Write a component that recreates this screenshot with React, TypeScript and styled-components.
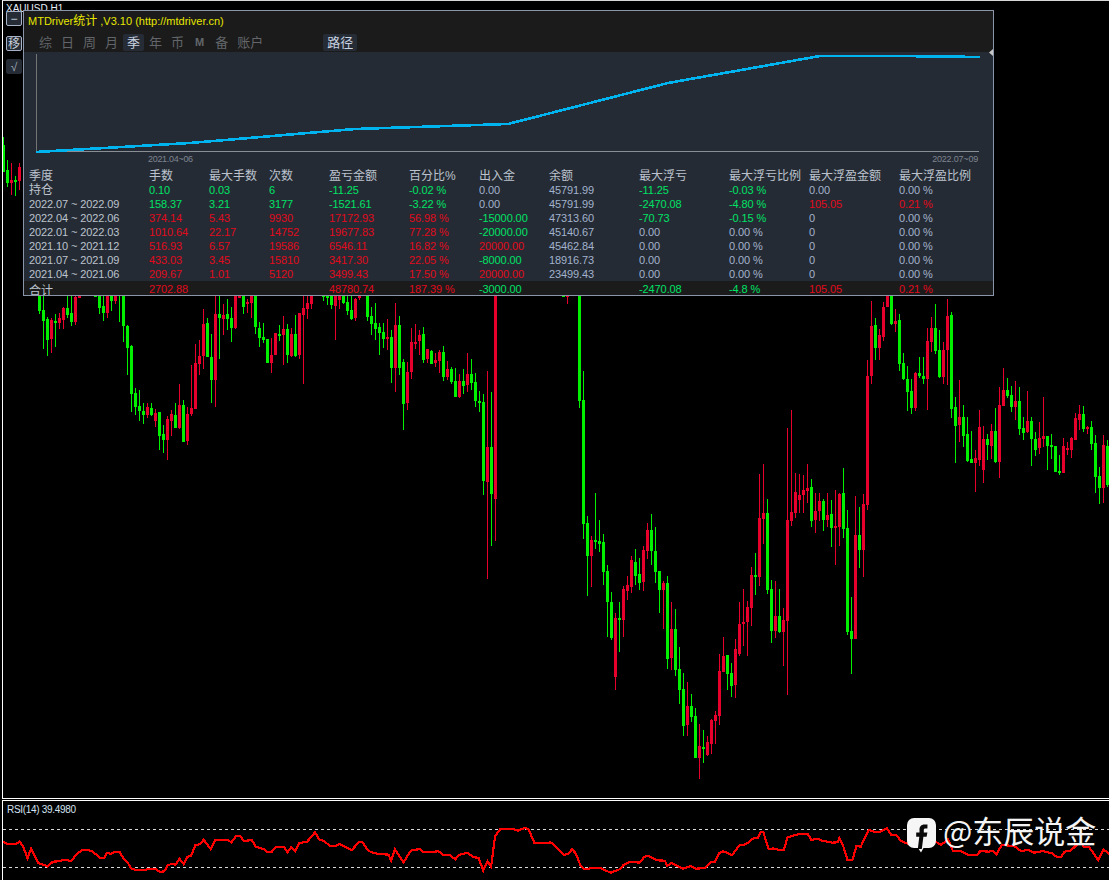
import styled, {createGlobalStyle} from 'styled-components';

const GlobalStyle = createGlobalStyle`
  html, body {
    margin: 0;
    background: #000;
  }
`;

const UI_FONT = `"Liberation Sans", "Noto Sans CJK SC", sans-serif`;

const Page = styled.div`
  width: 1109px;
  height: 880px;
  padding-left: 2px;
  box-sizing: border-box;
  overflow: hidden;
  background: #000;
  font-family: ${UI_FONT};
  display: flex;
  flex-direction: column;
  gap: 1px;
`;

const ChartPane = styled.div`
  position: relative;
  height: 799px;
  flex: none;
  box-sizing: border-box;
  border-left: 1px solid #fff;
  border-top: 1px solid #d8d8d8;
  border-bottom: 1px solid #fff;
`;

const IndicatorPane = styled.div`
  position: relative;
  flex: 1;
  border-left: 1px solid #fff;
  border-top: 1px solid #fff;
`;

const PlotSvg = styled.svg`
  display: block;
  width: 100%;
  height: 100%;
`;

const SymbolLabel = styled.div`
  position: absolute;
  left: 3px;
  top: 2px;
  font-size: 10px;
  line-height: 12px;
  color: #e8eef8;
`;

const SideButton = styled.div<{$top: number; $flat?: boolean}>`
  position: absolute;
  left: 3px;
  top: ${p => p.$top}px;
  width: 16px;
  height: 15px;
  box-sizing: border-box;
  display: flex;
  align-items: center;
  justify-content: center;
  border: 1px solid ${p => (p.$flat ? '#262c35' : '#a8b2c6')};
  border-radius: 2px;
  background: #262c35;
  color: ${p => (p.$flat ? '#9aa4b4' : '#c8d0dc')};
  font-size: 12px;
  line-height: 12px;
`;

const Panel = styled.div`
  position: absolute;
  left: 20px;
  top: 9px;
  width: 971px;
  height: 286px;
  box-sizing: border-box;
  border: 1px solid #8b95a9;
  background: #1b1b1b;
  display: flex;
  flex-direction: column;
`;

const TitleBar = styled.div`
  height: 23px;
  flex: none;
  padding: 2px 0 0 4px;
  box-sizing: border-box;
  color: #e6e600;
  font-size: 11px;
  line-height: 17px;
`;

const TitleCjk = styled.span`
  font-size: 12px;
`;

const TabRow = styled.div`
  height: 18px;
  flex: none;
  padding-left: 11px;
  display: flex;
  align-items: flex-start;
`;

const Tab = styled.div<{$active?: boolean; $small?: boolean; $gapLeft?: number}>`
  height: 17px;
  padding: 0 ${p => (p.$small ? 6 : 4)}px;
  margin-left: ${p => p.$gapLeft ?? 0}px;
  margin-right: 1px;
  border-radius: 2px;
  background: ${p => (p.$active ? '#262c35' : 'transparent')};
  color: ${p => (p.$active ? '#c8d2e0' : '#62666a')};
  font-size: ${p => (p.$small ? 11 : 13)}px;
  font-weight: ${p => (p.$small ? 700 : 400)};
  line-height: 17px;
`;

const Content = styled.div`
  flex: 1;
  background: #252b34;
  display: flex;
  flex-direction: column;
`;

const ProfitSvg = styled.svg`
  display: block;
  flex: none;
  width: 969px;
  height: 117px;
  overflow: visible;
`;

const tones = {
  label: '#bcc3ce',
  plain: '#a2b2cc',
  up: '#00e266',
  down: '#e00a1c',
};

type Tone = keyof typeof tones;

const COLUMNS = '120px 60px 60px 60px 80px 70px 70px 90px 90px 80px 90px 1fr';

const Row = styled.div<{$total?: boolean}>`
  height: 14px;
  flex: none;
  padding-left: 5px;
  display: grid;
  grid-template-columns: ${COLUMNS};
  background: ${p => (p.$total ? '#1b1b1b' : 'transparent')};
  overflow: hidden;
`;

const Cell = styled.div<{$tone: Tone; $cjk?: boolean; $drop?: number}>`
  color: ${p => tones[p.$tone]};
  font-size: ${p => (p.$cjk ? 12 : 11)}px;
  letter-spacing: ${p => (p.$cjk ? 0 : -0.1)}px;
  line-height: 14px;
  padding-top: ${p => p.$drop ?? 0}px;
  white-space: nowrap;
`;

const Handle = styled.span`
  display: inline-block;
  font-size: 31px;
  line-height: 36px;
  margin-bottom: 11px;
`;

const Watermark = styled.div`
  position: absolute;
  left: 904px;
  top: 11px;
  display: flex;
  align-items: center;
  gap: 7px;
  color: #f4f4f4;
  font-family: "Noto Sans CJK SC", "Liberation Sans", sans-serif;
  white-space: nowrap;
`;

const RsiLabel = styled.div`
  position: absolute;
  left: 4px;
  top: 3px;
  color: #d4e2f2;
  font-size: 10px;
  letter-spacing: -0.3px;
  line-height: 12px;
`;

// [bar index, high, body top, body bottom, low, green?]
// y values are thirds of a pixel below y=290
type Bar = [number, number, number, number, number, number];

const BARS: Bar[] = [
  [-9, -459, -435, -354, -354, 1],
  [-8, -390, -360, -321, -309, 1],
  [-7, -381, -330, -321, -285, 0],
  [-6, -342, -330, -324, -282, 1],
  [-5, -381, -369, -327, -300, 0],
  [0, 0, 0, 63, 72, 1],
  [1, 0, 60, 93, 178, 1],
  [2, 80, 87, 150, 197, 1],
  [3, 85, 90, 147, 188, 0],
  [4, 72, 93, 96, 170, 1],
  [5, 70, 84, 98, 117, 0],
  [6, 52, 54, 90, 117, 0],
  [7, 0, 54, 76, 85, 1],
  [8, 0, 69, 96, 108, 1],
  [9, 0, 22, 96, 105, 0],
  [10, 0, 0, 24, 24, 0],
  [14, 0, 0, 20, 20, 1],
  [15, 0, 0, 55, 72, 1],
  [16, 0, 47, 69, 93, 1],
  [17, 0, 0, 69, 84, 0],
  [18, 0, 0, 34, 64, 1],
  [19, 0, 0, 34, 42, 0],
  [20, 0, 0, 0, 96, 1],
  [21, 0, 0, 108, 156, 1],
  [22, 105, 108, 174, 255, 1],
  [23, 165, 168, 312, 365, 1],
  [24, 295, 310, 351, 375, 1],
  [25, 300, 348, 363, 393, 1],
  [26, 339, 363, 375, 402, 1],
  [27, 339, 351, 375, 384, 0],
  [28, 339, 354, 375, 378, 1],
  [29, 357, 369, 393, 411, 0],
  [30, 366, 366, 438, 480, 1],
  [31, 405, 432, 450, 489, 1],
  [32, 378, 387, 450, 510, 0],
  [33, 360, 372, 393, 438, 0],
  [34, 339, 375, 414, 414, 1],
  [35, 282, 345, 414, 417, 0],
  [36, 330, 345, 456, 456, 1],
  [37, 351, 372, 453, 465, 0],
  [38, 225, 354, 372, 378, 0],
  [39, 162, 219, 357, 357, 0],
  [40, 150, 198, 222, 255, 0],
  [41, 57, 102, 198, 237, 0],
  [42, 85, 99, 201, 201, 1],
  [43, 132, 201, 270, 339, 1],
  [44, 0, 72, 270, 351, 0],
  [45, 0, 72, 84, 207, 1],
  [46, 42, 75, 87, 135, 0],
  [47, 27, 72, 87, 120, 1],
  [48, 50, 84, 114, 156, 1],
  [49, 0, 0, 114, 117, 0],
  [50, 0, 0, 24, 24, 0],
  [51, 0, 0, 51, 72, 1],
  [52, 27, 36, 42, 69, 0],
  [53, 0, 0, 39, 84, 0],
  [54, 0, 0, 111, 132, 1],
  [55, 96, 114, 144, 171, 1],
  [56, 99, 141, 150, 159, 1],
  [57, 147, 147, 219, 219, 1],
  [58, 144, 195, 219, 249, 0],
  [59, 129, 129, 195, 195, 0],
  [60, 105, 132, 135, 153, 1],
  [61, 78, 117, 135, 225, 0],
  [62, 102, 117, 195, 219, 1],
  [63, 114, 132, 198, 201, 0],
  [64, 75, 132, 198, 201, 1],
  [65, 69, 69, 195, 207, 0],
  [66, 0, 54, 75, 282, 0],
  [67, 0, 39, 57, 87, 0],
  [68, 0, 0, 42, 57, 0],
  [71, 0, 0, 20, 33, 1],
  [72, 0, 0, 24, 45, 1],
  [73, 0, 0, 45, 57, 1],
  [74, 0, 0, 48, 150, 0],
  [75, 0, 0, 30, 57, 0],
  [76, 0, 0, 39, 42, 1],
  [77, 0, 36, 63, 75, 1],
  [78, 0, 60, 87, 90, 1],
  [79, 24, 27, 84, 93, 0],
  [80, 0, 0, 24, 30, 0],
  [82, 0, 0, 81, 93, 1],
  [83, 51, 78, 102, 135, 1],
  [84, 39, 99, 117, 150, 1],
  [85, 100, 111, 129, 195, 1],
  [86, 99, 126, 147, 174, 1],
  [87, 87, 141, 144, 180, 0],
  [88, 120, 141, 234, 279, 1],
  [89, 39, 105, 234, 306, 0],
  [90, 78, 105, 234, 255, 1],
  [91, 207, 216, 342, 420, 1],
  [92, 216, 246, 339, 360, 0],
  [93, 114, 156, 246, 267, 0],
  [94, 102, 156, 159, 177, 0],
  [95, 120, 135, 153, 195, 0],
  [96, 111, 132, 210, 219, 1],
  [97, 177, 177, 207, 219, 0],
  [98, 180, 183, 222, 222, 1],
  [99, 189, 210, 219, 231, 0],
  [100, 180, 186, 213, 249, 0],
  [101, 168, 186, 261, 273, 1],
  [102, 213, 237, 261, 270, 0],
  [103, 231, 237, 276, 282, 1],
  [104, 234, 273, 321, 321, 1],
  [105, 252, 273, 321, 324, 0],
  [106, 237, 273, 288, 312, 1],
  [107, 189, 252, 285, 306, 0],
  [108, 207, 252, 279, 300, 1],
  [109, 249, 276, 333, 351, 1],
  [110, 303, 333, 339, 366, 1],
  [111, 312, 336, 573, 615, 1],
  [112, 243, 471, 576, 867, 0],
  [113, 306, 471, 612, 768, 1],
  [114, 0, 0, 627, 753, 0],
  [131, 0, 0, 20, 20, 1],
  [132, 0, 0, 20, 42, 0],
  [135, 0, 0, 333, 354, 1],
  [136, 243, 330, 702, 747, 1],
  [137, 678, 699, 798, 918, 1],
  [138, 738, 750, 798, 891, 0],
  [139, 609, 750, 756, 777, 1],
  [140, 690, 753, 762, 786, 1],
  [141, 732, 756, 846, 885, 1],
  [142, 825, 843, 936, 1041, 1],
  [143, 906, 936, 1044, 1050, 1],
  [144, 969, 984, 1161, 1200, 0],
  [145, 936, 984, 990, 1086, 1],
  [146, 888, 897, 990, 1041, 0],
  [147, 858, 885, 903, 930, 0],
  [148, 798, 810, 891, 909, 0],
  [149, 777, 816, 858, 885, 1],
  [150, 804, 852, 879, 900, 1],
  [151, 768, 780, 876, 903, 0],
  [152, 699, 720, 783, 807, 0],
  [153, 672, 720, 783, 825, 1],
  [154, 711, 783, 846, 879, 1],
  [155, 843, 843, 900, 969, 1],
  [156, 873, 879, 900, 1017, 0],
  [157, 858, 879, 1107, 1137, 1],
  [158, 936, 1017, 1104, 1140, 0],
  [159, 957, 1017, 1140, 1158, 1],
  [160, 1071, 1137, 1200, 1242, 1],
  [161, 1149, 1197, 1308, 1338, 1],
  [162, 1176, 1248, 1305, 1338, 0],
  [163, 1212, 1248, 1281, 1296, 1],
  [164, 1254, 1278, 1404, 1404, 1],
  [165, 1302, 1368, 1404, 1467, 0],
  [166, 1320, 1371, 1377, 1419, 1],
  [167, 1338, 1356, 1395, 1398, 0],
  [168, 1287, 1290, 1362, 1392, 0],
  [169, 1263, 1275, 1293, 1362, 0],
  [170, 1092, 1143, 1278, 1305, 0],
  [171, 1041, 1098, 1146, 1146, 0],
  [172, 1095, 1095, 1152, 1200, 1],
  [173, 1119, 1149, 1188, 1221, 1],
  [174, 1047, 1077, 1185, 1224, 0],
  [175, 936, 1002, 1092, 1098, 0],
  [176, 897, 996, 1002, 1068, 0],
  [177, 933, 951, 996, 1098, 0],
  [178, 831, 855, 954, 1008, 0],
  [179, 789, 855, 861, 915, 1],
  [180, 552, 684, 861, 888, 0],
  [181, 522, 669, 687, 762, 0],
  [182, 628, 669, 900, 912, 1],
  [183, 870, 897, 1023, 1059, 1],
  [184, 873, 978, 1023, 1044, 0],
  [185, 897, 978, 1026, 1029, 1],
  [186, 954, 990, 1026, 1128, 0],
  [187, 414, 690, 993, 1215, 0],
  [188, 360, 666, 693, 708, 0],
  [189, 549, 606, 669, 684, 0],
  [190, 552, 615, 630, 669, 0],
  [191, 555, 600, 615, 669, 0],
  [192, 522, 594, 603, 639, 0],
  [193, 567, 591, 693, 711, 1],
  [194, 609, 663, 690, 729, 0],
  [195, 609, 633, 663, 693, 0],
  [196, 627, 633, 690, 723, 1],
  [197, 609, 675, 690, 711, 0],
  [198, 630, 672, 714, 771, 1],
  [199, 600, 708, 714, 825, 0],
  [200, 609, 612, 711, 768, 0],
  [201, 534, 609, 717, 744, 1],
  [202, 660, 714, 1026, 1035, 1],
  [203, 921, 1023, 1047, 1152, 1],
  [204, 618, 735, 1047, 1047, 0],
  [205, 651, 735, 780, 834, 1],
  [206, 612, 642, 780, 861, 0],
  [207, 210, 258, 645, 660, 0],
  [208, 33, 108, 258, 282, 0],
  [209, 84, 105, 174, 210, 1],
  [210, 117, 135, 174, 210, 0],
  [211, 36, 51, 141, 153, 0],
  [212, 0, 0, 51, 51, 0],
  [213, 0, 0, 102, 105, 1],
  [214, 57, 93, 102, 126, 0],
  [215, 72, 90, 222, 243, 1],
  [216, 189, 219, 267, 270, 1],
  [217, 228, 267, 306, 363, 1],
  [218, 267, 303, 354, 372, 1],
  [219, 246, 249, 354, 363, 0],
  [220, 201, 249, 258, 264, 1],
  [221, 201, 258, 267, 282, 1],
  [222, 114, 153, 267, 360, 0],
  [223, 81, 114, 156, 186, 0],
  [224, 42, 114, 183, 192, 1],
  [225, 120, 180, 261, 264, 1],
  [226, 156, 180, 261, 282, 0],
  [227, 27, 78, 180, 285, 0],
  [228, 66, 75, 357, 384, 1],
  [229, 321, 351, 408, 519, 1],
  [230, 270, 381, 405, 456, 0],
  [231, 345, 381, 438, 471, 1],
  [232, 381, 432, 513, 516, 1],
  [233, 423, 507, 519, 519, 1],
  [234, 480, 504, 519, 606, 0],
  [235, 360, 411, 510, 528, 0],
  [236, 408, 447, 540, 579, 0],
  [237, 432, 447, 465, 510, 1],
  [238, 402, 423, 468, 507, 0],
  [239, 354, 423, 516, 519, 1],
  [240, 291, 345, 516, 564, 0],
  [241, 234, 300, 348, 348, 0],
  [242, 264, 300, 318, 324, 1],
  [243, 288, 315, 351, 366, 1],
  [244, 273, 333, 351, 390, 0],
  [245, 291, 333, 417, 435, 1],
  [246, 381, 414, 429, 450, 1],
  [247, 303, 393, 426, 429, 0],
  [248, 381, 393, 447, 528, 1],
  [249, 426, 447, 480, 498, 1],
  [250, 396, 444, 474, 492, 0],
  [251, 321, 438, 447, 471, 0],
  [252, 438, 438, 468, 540, 1],
  [253, 432, 465, 471, 507, 1],
  [254, 468, 468, 546, 546, 1],
  [255, 495, 543, 549, 555, 1],
  [256, 444, 468, 549, 549, 0],
  [257, 456, 474, 480, 495, 0],
  [258, 441, 444, 480, 504, 0],
  [259, 369, 384, 450, 450, 0],
  [260, 345, 372, 390, 420, 0],
  [261, 348, 372, 417, 426, 1],
  [262, 408, 411, 417, 432, 0],
  [263, 393, 411, 462, 480, 1],
  [264, 435, 459, 561, 609, 1],
  [265, 531, 558, 594, 642, 1],
  [266, 435, 465, 594, 640, 0],
  [267, 450, 468, 585, 592, 1],
];

const barY = (v: number) => Math.round(290 + v / 3);

const RSI_LEFT = [
  8, 155, 20, 161, 45, 161, 55, 155, 65, 170, 77, 205, 87, 176, 108, 220, 122, 224, 133, 230, 148, 215, 165, 214, 178,
  209, 200, 213, 215, 192, 232, 179, 245, 180, 260, 185, 280, 204, 292, 203, 300, 188, 310, 192, 320, 186, 335, 186,
  345, 204, 357, 217, 368, 236, 380, 240, 408, 239, 420, 236, 435, 236, 448, 246, 460, 244, 470, 226, 480, 222, 492,
  224, 502, 206, 514, 222, 525, 200, 535, 197, 547, 165, 560, 163, 570, 149, 590, 177, 603, 150, 635, 149, 648, 157,
  662, 137, 672, 137, 682, 153, 705, 150, 716, 170, 740, 178, 750, 187, 760, 187, 772, 171, 795, 171, 805, 187, 815,
  172, 827, 183, 838, 159, 860, 155, 882, 127, 895, 150, 905, 152, 925, 168, 940, 168, 950, 161, 965, 170, 985, 181,
  1005, 155, 1015, 157, 1032, 183, 1050, 190, 1065, 192, 1088, 194, 1095, 213, 1106, 178, 1130, 217, 1150, 182, 1175,
  177, 1185, 187, 1205, 186, 1228, 184, 1240, 194, 1258, 195, 1275, 208, 1285, 195, 1310, 188, 1325, 202, 1340, 203,
  1353, 242, 1365, 214, 1375, 230, 1386, 140, 1400, 118, 1432, 116, 1450, 122, 1470, 113, 1480, 118, 1497, 160, 1540,
  158,
];

const RSI_RIGHT = [
  0, 157, 10, 163, 38, 195, 50, 192, 62, 178, 72, 190, 85, 226, 97, 238, 125, 233, 140, 234, 170, 248, 195, 238, 205,
  226, 225, 215, 250, 218, 265, 200, 275, 198, 300, 211, 322, 212, 328, 228, 340, 218, 372, 236, 395, 228, 408, 236,
  435, 234, 450, 217, 462, 215, 475, 188, 485, 184, 510, 195, 530, 166, 548, 163, 570, 145, 583, 143, 590, 125, 597,
  125, 612, 178, 625, 175, 638, 179, 655, 179, 665, 142, 695, 133, 722, 133, 732, 150, 750, 146, 762, 152, 790, 158,
  805, 157, 810, 145, 820, 165, 833, 210, 847, 210, 858, 168, 870, 170, 892, 120, 912, 127, 925, 125, 943, 115, 955,
  134, 970, 135, 982, 152, 1010, 165, 1035, 155, 1050, 150, 1080, 155, 1095, 165, 1115, 148, 1128, 183, 1150, 183,
  1172, 195, 1195, 195, 1205, 183, 1228, 185, 1240, 183, 1250, 193, 1265, 165, 1300, 168, 1318, 183, 1340, 180, 1355,
  188, 1380, 183, 1405, 190, 1420, 201, 1432, 201, 1440, 185, 1458, 182, 1478, 161, 1490, 163, 1495, 170, 1510, 172,
  1535, 210, 1550, 178, 1568, 195,
];

const rsiPoints = () => {
  const out: string[] = [];
  for (let n = 0; n < RSI_LEFT.length; n += 2) {
    out.push(`${(RSI_LEFT[n] / 2.8).toFixed(1)},${(790 + RSI_LEFT[n + 1] / 3).toFixed(1)}`);
  }
  for (let n = 0; n < RSI_RIGHT.length; n += 2) {
    out.push(`${(550 + RSI_RIGHT[n] / 2.8).toFixed(1)},${(790 + RSI_RIGHT[n + 1] / 3).toFixed(1)}`);
  }
  return out.join(' ');
};

const TABS = ['综', '日', '周', '月', '季', '年', '币', 'M', '备', '账户'];

const HEADERS = [
  '季度',
  '手数',
  '最大手数',
  '次数',
  '盈亏金额',
  '百分比%',
  '出入金',
  '余额',
  '最大浮亏',
  '最大浮亏比例',
  '最大浮盈金额',
  '最大浮盈比例',
];

type DataCell = [string, Tone];

const u = (text: string): DataCell => [text, 'up'];
const d = (text: string): DataCell => [text, 'down'];
const n = (text: string): DataCell => [text, 'plain'];

const ROWS: {label: string; cells: DataCell[]}[] = [
  {
    label: '持仓',
    cells: [
      u('0.10'), u('0.03'), u('6'), u('-11.25'), u('-0.02 %'), n('0.00'),
      n('45791.99'), u('-11.25'), u('-0.03 %'), n('0.00'), n('0.00 %'),
    ],
  },
  {
    label: '2022.07 ~ 2022.09',
    cells: [
      u('158.37'), u('3.21'), u('3177'), u('-1521.61'), u('-3.22 %'), n('0.00'),
      n('45791.99'), u('-2470.08'), u('-4.80 %'), d('105.05'), d('0.21 %'),
    ],
  },
  {
    label: '2022.04 ~ 2022.06',
    cells: [
      d('374.14'), d('5.43'), d('9930'), d('17172.93'), d('56.98 %'), u('-15000.00'),
      n('47313.60'), u('-70.73'), u('-0.15 %'), n('0'), n('0.00 %'),
    ],
  },
  {
    label: '2022.01 ~ 2022.03',
    cells: [
      d('1010.64'), d('22.17'), d('14752'), d('19677.83'), d('77.28 %'), u('-20000.00'),
      n('45140.67'), n('0.00'), n('0.00 %'), n('0'), n('0.00 %'),
    ],
  },
  {
    label: '2021.10 ~ 2021.12',
    cells: [
      d('516.93'), d('6.57'), d('19586'), d('6546.11'), d('16.82 %'), d('20000.00'),
      n('45462.84'), n('0.00'), n('0.00 %'), n('0'), n('0.00 %'),
    ],
  },
  {
    label: '2021.07 ~ 2021.09',
    cells: [
      d('433.03'), d('3.45'), d('15810'), d('3417.30'), d('22.05 %'), u('-8000.00'),
      n('18916.73'), n('0.00'), n('0.00 %'), n('0'), n('0.00 %'),
    ],
  },
  {
    label: '2021.04 ~ 2021.06',
    cells: [
      d('209.67'), d('1.01'), d('5120'), d('3499.43'), d('17.50 %'), d('20000.00'),
      n('23499.43'), n('0.00'), n('0.00 %'), n('0'), n('0.00 %'),
    ],
  },
];

const TOTAL: DataCell[] = [
  d('2702.88'), n(''), n(''), d('48780.74'), d('187.39 %'), u('-3000.00'),
  n(''), u('-2470.08'), u('-4.8 %'), d('105.05'), d('0.21 %'),
];

const ProfitChart = () => (
  <ProfitSvg viewBox="24 52 969 117">
    <polygon points="993,49 993,56 989,52.5" fill="#c8c8c8" />
    <line x1="36.5" y1="54" x2="36.5" y2="152" stroke="#747474" />
    <line x1="36" y1="151.5" x2="979" y2="151.5" stroke="#8a8f96" />
    <polyline
      points="36,152 190,143 355,129 508,124 668,83 820,56 900,56 980,57"
      fill="none"
      stroke="#00b4f0"
      strokeWidth={2.6}
      shapeRendering="crispEdges"
    />
    <text x="148" y="162" fontSize="9" letterSpacing="-0.3" fill="#7d8490" fontFamily="Liberation Sans">
      2021.04~06
    </text>
    <text x="978" y="162" fontSize="9" letterSpacing="-0.2" fill="#7d8490" fontFamily="Liberation Sans" textAnchor="end">
      2022.07~09
    </text>
  </ProfitSvg>
);

const Candles = () => (
  <PlotSvg viewBox="3 1 1106 797" shapeRendering="crispEdges">
    {BARS.map(([i, hi, top, bot, lo, green]) => {
      const x = 39 + 4 * i;
      const color = green ? '#00f000' : '#e8002d';
      return (
        <g key={i} fill={color}>
          <rect x={x} y={barY(hi)} width={1} height={Math.max(barY(lo) - barY(hi), 1)} />
          <rect x={x - 1} y={barY(top)} width={3} height={Math.max(barY(bot) - barY(top), 2)} />
        </g>
      );
    })}
  </PlotSvg>
);

const RsiChart = () => (
  <PlotSvg viewBox="3 801 1106 79">
    <line x1="3" y1="829.5" x2="1109" y2="829.5" stroke="#d8d8d8" strokeDasharray="3 3" />
    <line x1="3" y1="867.5" x2="1109" y2="867.5" stroke="#d8d8d8" strokeDasharray="3 3" />
    <polyline points={rsiPoints()} fill="none" stroke="#ff0000" strokeWidth={2.2} shapeRendering="crispEdges" />
  </PlotSvg>
);

const ChannelLogo = () => (
  <svg width="29" height="35" viewBox="0 0 29 35">
    <path
      d="M7 0h15a7 7 0 0 1 7 7v16a7 7 0 0 1-7 7h-5.5l-2.5 4.5-3-4.5H7a7 7 0 0 1-7-7V7a7 7 0 0 1 7-7z"
      fill="#f6f6f6"
    />
    <path
      d="M20.5 6.5h-3c-3.4 0-5 2.2-5 5v3H9.2v4.2h3.1L10.8 31h4l1.6-12.3h3.2l.8-4.2h-3.6v-2.4c0-1 .5-1.5 1.6-1.5h2z"
      fill="#0a0a0a"
    />
  </svg>
);

export default function App() {
  return (
    <Page>
      <GlobalStyle />
      <ChartPane>
        <Candles />
        <SymbolLabel>XAUUSD,H1</SymbolLabel>
        <SideButton $top={10}>−</SideButton>
        <SideButton $top={35}>移</SideButton>
        <SideButton $top={58} $flat>
          √
        </SideButton>
        <Panel>
          <TitleBar>
            MTDriver<TitleCjk>统计</TitleCjk> ,V3.10 (http://mtdriver.cn)
          </TitleBar>
          <TabRow>
            {TABS.map(tab => (
              <Tab key={tab} $active={tab === '季'} $small={tab === 'M'}>
                {tab}
              </Tab>
            ))}
            <Tab $active $gapLeft={55}>
              路径
            </Tab>
          </TabRow>
          <Content>
            <ProfitChart />
            <Row>
              {HEADERS.map(title => (
                <Cell key={title} $tone="label" $cjk>
                  {title}
                </Cell>
              ))}
            </Row>
            {ROWS.map(row => (
              <Row key={row.label}>
                <Cell $tone="label" $cjk={row.label === '持仓'}>
                  {row.label}
                </Cell>
                {row.cells.map(([text, tone], col) => (
                  <Cell key={col} $tone={tone}>
                    {text}
                  </Cell>
                ))}
              </Row>
            ))}
            <Row $total>
              <Cell $tone="label" $cjk $drop={3}>
                合计
              </Cell>
              {TOTAL.map(([text, tone], col) => (
                <Cell key={col} $tone={tone} $drop={1}>
                  {text}
                </Cell>
              ))}
            </Row>
          </Content>
        </Panel>
      </ChartPane>
      <IndicatorPane>
        <RsiChart />
        <RsiLabel>RSI(14) 39.4980</RsiLabel>
        <Watermark>
          <ChannelLogo />
          <Handle>@东辰说金</Handle>
        </Watermark>
      </IndicatorPane>
    </Page>
  );
}
